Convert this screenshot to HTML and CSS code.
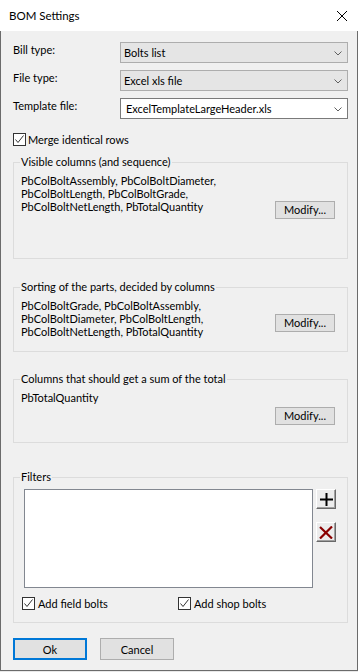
FILE: index.html
```html
<!DOCTYPE html>
<html lang="en">
<head>
<meta charset="utf-8">
<title>BOM Settings</title>
<link rel="stylesheet" href="styles.css">
</head>
<body>
<div class="window">
  <div class="titlebar">
    <span class="title">BOM Settings</span>
    <svg class="close" width="10" height="10" viewBox="0 0 10 10"><path d="M0 0L10 10M10 0L0 10" stroke="#000" stroke-width="1"/></svg>
  </div>
  <div class="body">
    <div class="form">
      <div class="label">Bill type:</div>
      <div class="combo"><span>Bolts list</span><svg class="chev" width="8" height="5" viewBox="0 0 8 5"><path d="M0.5 0.5L4 4L7.5 0.5" fill="none" stroke="#606060"/></svg></div>
      <div class="label">File type:</div>
      <div class="combo"><span>Excel xls file</span><svg class="chev" width="8" height="5" viewBox="0 0 8 5"><path d="M0.5 0.5L4 4L7.5 0.5" fill="none" stroke="#606060"/></svg></div>
      <div class="label">Template file:</div>
      <div class="combo edit"><span>ExcelTemplateLargeHeader.xls</span><svg class="chev" width="8" height="5" viewBox="0 0 8 5"><path d="M0.5 0.5L4 4L7.5 0.5" fill="none" stroke="#606060"/></svg></div>
    </div>

    <div class="check merge">
      <span class="box"><svg width="11" height="11" viewBox="0 0 11 11"><path d="M1.5 5.5L4 8.5L9.5 1.5" fill="none" stroke="#333" stroke-width="1"/></svg></span>
      <span>Merge identical rows</span>
    </div>

    <div class="group g1">
      <span class="legend">Visible columns (and sequence)</span>
      <div class="gbody">
        <div class="lines">
          <div>PbColBoltAssembly, PbColBoltDiameter,</div>
          <div>PbColBoltLength, PbColBoltGrade,</div>
          <div>PbColBoltNetLength, PbTotalQuantity</div>
        </div>
        <button class="modify m1">Modify...</button>
      </div>
    </div>

    <div class="group g2">
      <span class="legend">Sorting of the parts, decided by columns</span>
      <div class="gbody">
        <div class="lines">
          <div>PbColBoltGrade, PbColBoltAssembly,</div>
          <div>PbColBoltDiameter, PbColBoltLength,</div>
          <div>PbColBoltNetLength, PbTotalQuantity</div>
        </div>
        <button class="modify m2">Modify...</button>
      </div>
    </div>

    <div class="group g3">
      <span class="legend">Columns that should get a sum of the total</span>
      <div class="gbody">
        <div class="lines">
          <div>PbTotalQuantity</div>
        </div>
        <button class="modify m3">Modify...</button>
      </div>
    </div>

    <div class="group g4">
      <span class="legend">Filters</span>
      <div class="filters">
        <div class="listbox"></div>
        <div class="tools">
          <button class="tool"><svg width="13" height="13" viewBox="0 0 13 13"><path d="M0 6.5H13M6.5 0V13" stroke="#000" stroke-width="2"/></svg></button>
          <button class="tool"><svg width="14" height="13" viewBox="0 0 14 13"><path d="M1 1L13 12.5M13 0.5L1 12.5" stroke="#8a0000" stroke-width="2.2"/></svg></button>
        </div>
      </div>
      <div class="checks">
        <div class="check first">
          <span class="box"><svg width="11" height="11" viewBox="0 0 11 11"><path d="M1.5 5.5L4 8.5L9.5 1.5" fill="none" stroke="#333" stroke-width="1"/></svg></span>
          <span>Add field bolts</span>
        </div>
        <div class="check">
          <span class="box"><svg width="11" height="11" viewBox="0 0 11 11"><path d="M1.5 5.5L4 8.5L9.5 1.5" fill="none" stroke="#333" stroke-width="1"/></svg></span>
          <span>Add shop bolts</span>
        </div>
      </div>
    </div>

    <div class="actions">
      <button class="btn ok">Ok</button>
      <button class="btn">Cancel</button>
    </div>
  </div>
</div>
</body>
</html>
```

FILE: styles.css
```css
* { box-sizing: border-box; }
html, body { margin: 0; padding: 0; }
body {
  width: 358px;
  height: 672px;
  overflow: hidden;
  background: #e8e8e8;
  font-family: Lato, "Liberation Sans", sans-serif;
  font-size: 11px;
  color: #000;
}
.window {
  width: 358px;
  height: 671px;
  display: flex;
  flex-direction: column;
}
.titlebar {
  flex: none;
  height: 31px;
  background: #fff;
  display: flex;
  align-items: center;
  justify-content: space-between;
  padding: 0 11px 0 9px;
}
.title { line-height: 16px; padding-top: 1px; font-size: 11.5px; }
.close { display: block; }
.body {
  flex: 1;
  background: #f0f0f0;
  border: 1px solid #6b6b6b;
  border-top: 0;
  padding: 11px 9px 0 12px;
  display: flex;
  flex-direction: column;
}
.form {
  display: grid;
  grid-template-columns: 108px 228px;
  row-gap: 7px;
  margin-left: -1px;
}
.label { line-height: 16px; padding-left: 1px; }
.combo {
  height: 21px;
  border: 1px solid #adadad;
  background: #e5e5e5;
  display: flex;
  align-items: center;
  justify-content: space-between;
  padding: 0 5px 0 3px;
}
.combo.edit { background: #fff; border-color: #7a7a7a; padding-left: 5px; }
.chev { display: block; margin-top: 1px; }
.check {
  display: flex;
  align-items: center;
  gap: 2px;
  height: 15px;
  line-height: 15px;
}
.merge { margin-top: 13px; }
.box {
  width: 13px;
  height: 13px;
  border: 1px solid #333;
  background: #fff;
  display: flex;
  flex: none;
}
.box svg { display: block; }
.group {
  flex: none;
  border: 1px solid #dcdcdc;
  display: flex;
  flex-direction: column;
}
.legend {
  align-self: flex-start;
  margin: -9px 0 0 6px;
  padding: 0 1px;
  line-height: 16px;
  background: #f0f0f0;
}
.g1 { margin-top: 15px; height: 97px; }
.g2 { margin-top: 28px; height: 65px; }
.g3 { margin-top: 27px; height: 64px; }
.g4 { margin-top: 34px; height: 146px; }
.gbody {
  display: flex;
  justify-content: space-between;
  align-items: flex-start;
  margin-top: 4px;
  padding: 0 12px 0 7px;
}
.lines { line-height: 13px; }
.modify {
  width: 60px;
  height: 18px;
  border: 1px solid #adadad;
  background: #e1e1e1;
  font: inherit;
  color: #000;
  padding: 0;
  line-height: 16px;
}
.m1 { margin-top: 27px; }
.m2 { margin-top: 15px; }
.m3 { margin-top: 16px; }
.filters {
  display: flex;
  margin-top: 4px;
  padding-left: 10px;
}
.listbox {
  width: 289px;
  height: 99px;
  border: 1px solid #828790;
  background: #fff;
}
.tools {
  display: flex;
  flex-direction: column;
  gap: 13px;
  margin-left: 3px;
}
.tool {
  width: 20px;
  height: 20px;
  padding: 0;
  background: #ececec;
  border: 1px solid;
  border-color: #fff #696969 #696969 #fff;
  box-shadow: inset -1px -1px 0 #a0a0a0;
  display: flex;
  align-items: center;
  justify-content: center;
}
.tool svg { display: block; }
.checks {
  display: flex;
  margin-top: 8px;
  padding-left: 8px;
}
.checks .check { gap: 3px; }
.checks .first { width: 156px; }
.actions {
  display: flex;
  gap: 13px;
  margin-top: 15px;
}
.btn {
  width: 74px;
  height: 22px;
  border: 1px solid #adadad;
  background: #e1e1e1;
  font: inherit;
  color: #000;
  padding: 0;
}
.btn.ok { border: 2px solid #0078d7; }
```
